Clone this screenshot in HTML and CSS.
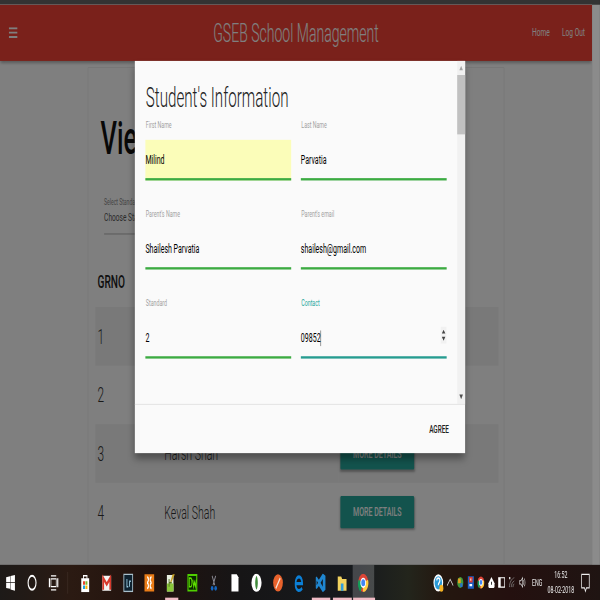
FILE: index.html
```html
<!DOCTYPE html>
<html lang="en">
<head>
<meta charset="utf-8">
<title>GSEB School Management</title>
<link rel="stylesheet" href="styles.css">
</head>
<body>
<div class="frame">
<div class="screen">
  <div class="chrome"></div>
  <div class="viewport">
    <div class="page">
      <nav class="navbar">
        <svg class="menu" viewBox="0 0 20 14"><path d="M0 0h20v2.500H0zM0 5.500h20V8H0zM0 11h20v2.500H0z"/></svg>
        <a class="brand">GSEB School Management</a>
        <div class="navlinks"><a>Home</a><a>Log Out</a></div>
      </nav>
      <main class="card">
        <h1 class="heading">View Students</h1>
        <div class="select">
          <div class="select-label">Select Standard</div>
          <div class="select-value">Choose Standard</div>
        </div>
        <table class="students">
          <thead><tr><th class="c-no">GRNO</th><th class="c-name"></th><th></th></tr></thead>
          <tbody>
            <tr class="odd"><td class="num">1</td><td>Milind Parvatia</td><td><span class="btn">More Details</span></td></tr>
            <tr><td class="num">2</td><td></td><td><span class="btn">More Details</span></td></tr>
            <tr class="odd"><td class="num">3</td><td>Harsh Shah</td><td><span class="btn">More Details</span></td></tr>
            <tr><td class="num">4</td><td>Keval Shah</td><td><span class="btn">More Details</span></td></tr>
          </tbody>
        </table>
      </main>
    </div>
    <div class="page-scroll"></div>
    <div class="overlay"></div>
    <section class="modal">
      <div class="modal-main">
        <div class="modal-body">
          <h2 class="modal-title">Student's Information</h2>
          <div class="form">
            <div class="field"><label class="f-label">First Name</label><div class="f-input autofill">Milind</div></div>
            <div class="field"><label class="f-label">Last Name</label><div class="f-input">Parvatia</div></div>
            <div class="field"><label class="f-label">Parent's Name</label><div class="f-input">Shailesh Parvatia</div></div>
            <div class="field"><label class="f-label">Parent's email</label><div class="f-input">shailesh@gmail.com</div></div>
            <div class="field"><label class="f-label">Standard</label><div class="f-input">2</div></div>
            <div class="field focus"><label class="f-label">Contact</label>
              <div class="f-input">09852<i class="caret"></i>
                <svg class="spin" viewBox="0 0 14 22"><rect width="14" height="22" fill="#f1f1f1"/><path d="M7 4l4 5H3zM7 18l4-5H3z" fill="#444"/></svg>
              </div>
            </div>
          </div>
        </div>
        <div class="vscroll">
          <svg class="arrow" viewBox="0 0 18 18"><path d="M9 6l4 6H5z" fill="#a3a3a3"/></svg>
          <div class="thumb"></div>
          <svg class="arrow arrow-down" viewBox="0 0 18 18"><path d="M9 12l4-6H5z" fill="#505050"/></svg>
        </div>
      </div>
      <footer class="modal-footer"><a class="agree">Agree</a></footer>
    </section>
  </div>
  <div class="taskbar">
    <div class="tb-left">
      <span class="slot"><svg class="ic" viewBox="0 0 24 24"><path fill="#fff" d="M2 5l9-1.500V11H2zM12 3.300L22 2v9H12zM2 12h9v7.500L2 18.500zM12 12h10v10l-10-1.500z"/></svg></span>
      <span class="slot"><svg class="ic" viewBox="0 0 24 24"><circle cx="12" cy="12" r="9" fill="none" stroke="#fff" stroke-width="2.500"/></svg></span>
      <span class="slot"><svg class="ic" viewBox="0 0 24 24"><path fill="none" stroke="#fff" stroke-width="1.600" d="M6 7h12v10H6zM2 7h1v10H2zM21 7h1v10h-1zM6 3h12M6 21h12"/></svg></span>
      <span class="sep"></span>
      <span class="slot"><svg class="ic" viewBox="0 0 24 24"><path fill="none" stroke="#fff" stroke-width="2" d="M8 7V3h8v4"/><path fill="#fff" d="M3 6h18v18H3z"/><path fill="#e8452c" d="M7 10h4.500v4.500H7z"/><path fill="#7cb82f" d="M12.500 10H17v4.500h-4.500z"/><path fill="#1ba1e2" d="M7 15.500h4.500V20H7z"/><path fill="#fbb800" d="M12.500 15.500H17V20h-4.500z"/></svg></span>
      <span class="slot"><svg class="ic" viewBox="0 0 24 24"><path fill="#f4f4f4" d="M2 3h20v19H2z"/><path fill="none" stroke="#d8392c" stroke-width="4" d="M4 21V6l8 8 8-8v15"/></svg></span>
      <span class="slot"><svg class="ic" viewBox="0 0 24 24"><path fill="#0e2230" stroke="#a9c0cc" stroke-width="2" d="M2 1h20v22H2z"/><path fill="none" stroke="#9ccbe0" stroke-width="2" d="M9 7v10h3M15 17v-7h3"/></svg></span>
      <span class="slot"><svg class="ic" viewBox="0 0 24 24"><path fill="#ea7c17" d="M1 1h22v22H1z"/><path fill="none" stroke="#fff" stroke-width="2.500" d="M7 5c4 0 4 6 0 7 4 1 4 7 0 7M17 5c-4 0-4 6 0 7-4 1-4 7 0 7"/></svg></span>
      <span class="slot"><svg class="ic" viewBox="0 0 24 24"><path fill="#e9efe0" d="M3 2h15v21H3z"/><path fill="#8bc83a" d="M3 13h15v10H3z"/><path fill="#c9a227" d="M16 1h5l-9 12-2-1z"/><path fill="#56741d" d="M7 7h2v10H7zM9 11h5v2H9z"/></svg></span>
      <span class="slot"><svg class="ic" viewBox="0 0 24 24"><path fill="#0a2a00" stroke="#4fd000" stroke-width="2.500" d="M2 2h20v20H2z"/><path fill="none" stroke="#5fe000" stroke-width="2" d="M5 6h3c4 0 4 11 0 11H5zM13 8l2 9 2-6 2 6 2-9"/></svg></span>
      <span class="slot"><svg class="ic" viewBox="0 0 24 24"><path fill="none" stroke="#8a8a94" stroke-width="2" d="M8 3l6 12M16 3l-6 12"/><circle cx="8" cy="19" r="3" fill="#1566c0"/><circle cx="16" cy="19" r="3" fill="#1566c0"/></svg></span>
      <span class="slot"><svg class="ic" viewBox="0 0 24 24"><path fill="#fff" d="M4 1h12l4 4v18H4z"/></svg></span>
      <span class="slot"><svg class="ic" viewBox="0 0 24 24"><circle cx="12" cy="12" r="11.500" fill="#fff"/><path fill="#3f8a3a" d="M12 3c4 4 4 14 0 18-4-4-4-14 0-18z"/></svg></span>
      <span class="slot"><svg class="ic" viewBox="0 0 24 24"><circle cx="12" cy="12" r="11" fill="#e8622c"/><path fill="none" stroke="#f6e4d8" stroke-width="2.500" d="M7 19L17 6"/></svg></span>
      <span class="slot"><svg class="ic" viewBox="0 0 24 24"><path fill="none" stroke="#0b7fd6" stroke-width="4" d="M4 13h15c0-12-15-11-15 0s10 10 15 6"/></svg></span>
      <span class="slot"><svg class="ic" viewBox="0 0 24 24"><path fill="#1f86d0" d="M17 0l6 3v18l-6 3-9-8-5 4-2-1V5l2-1 5 4zM17 7l-5 5 5 5zM3 9v6l3-3z"/></svg></span>
      <span class="slot"><svg class="ic" viewBox="0 0 24 24"><path fill="#f2d25f" d="M2 4h8l2 3h10v15H2z"/><path fill="#2e9ee0" d="M9 13h6v9H9z"/></svg></span>
      <span class="slot active"><svg class="ic" viewBox="0 0 24 24"><circle cx="12" cy="12" r="11.500" fill="#db4437"/><path fill="#0f9d58" d="M12 12L6 23.500A11.500 11.500 0 0 1 1.500 8z"/><path fill="#ffcd40" d="M12 12l11-4a11.500 11.500 0 0 1-12 15.500z"/><circle cx="12" cy="12" r="5.500" fill="#4285f4" stroke="#fff" stroke-width="2"/></svg></span>
    </div>
    <div class="tray">
      <span class="t-item t-help"><svg class="ic" viewBox="0 0 24 24"><circle cx="12" cy="12" r="11" fill="#fff"/><circle cx="12" cy="12" r="8.500" fill="#2a9bd8"/><path fill="none" stroke="#fff" stroke-width="2.500" d="M8.500 9c0-4 7-4 7 0 0 3-3.500 3-3.500 6"/><circle cx="19" cy="19" r="4.500" fill="#f5b324"/></svg></span>
      <span class="t-item"><svg class="ic-s" viewBox="0 0 16 16"><path fill="none" stroke="#ddd" stroke-width="1.500" d="M1 12l7-8 7 8"/></svg></span>
      <span class="t-item"><svg class="ic-s" viewBox="0 0 16 16"><circle cx="8" cy="8" r="7" fill="#3f9a3c"/><path fill="#e8a020" d="M3 3h6v6H3z"/><path fill="#2a6fd0" d="M8 9h5v5H8z"/></svg></span>
      <span class="t-item"><svg class="ic-s" viewBox="0 0 16 16"><path fill="#1d5fc4" d="M1 0h14v16H1z"/><path fill="#e23b32" d="M4 1h8v7H4z"/><path fill="#fff" d="M7 3h2v3H7zM5 10h6v3H5z"/></svg></span>
      <span class="t-item"><svg class="ic-s" viewBox="0 0 24 24"><circle cx="12" cy="12" r="11.500" fill="#db4437"/><path fill="#0f9d58" d="M12 12L6 23.500A11.500 11.500 0 0 1 1.500 8z"/><path fill="#ffcd40" d="M12 12l11-4a11.500 11.500 0 0 1-12 15.500z"/><circle cx="12" cy="12" r="5.500" fill="#4285f4" stroke="#fff" stroke-width="2"/></svg></span>
      <span class="t-item"><svg class="ic-s" viewBox="0 0 16 16"><path fill="#fff" d="M8 1l7 8v4a2 2 0 0 1-2 2H3a2 2 0 0 1-2-2V9z"/><path fill="#222" d="M7 7h2v4H7z"/></svg></span>
      <span class="t-item"><svg class="ic-s" viewBox="0 0 16 16"><path fill="none" stroke="#fff" stroke-width="1.500" d="M1 2h14v12H1z"/><path fill="#fff" d="M1 2h5v12H1z"/></svg></span>
      <span class="t-item"><svg class="ic-s" viewBox="0 0 16 16"><path fill="none" stroke="#8a8a8a" stroke-width="1.200" d="M2 14C2 8 7 3 13 2M6 14c0-3 3-7 7-8M10 14c0-2 1-4 3-4"/><path fill="#ddd" d="M1 1h3v3H1z"/></svg></span>
      <span class="t-item"><svg class="ic-s" viewBox="0 0 16 16"><path fill="none" stroke="#ddd" stroke-width="1.300" d="M2 6h3l4-4v12l-4-4H2zM11 5c1 2 1 4 0 6M13 3c2 3 2 7 0 10"/></svg></span>
      <span class="t-lang">ENG</span>
      <span class="t-clock"><span>16:52</span><span>08-02-2018</span></span>
      <span class="t-note"><svg class="ic-n" viewBox="0 0 20 24"><path fill="none" stroke="#eee" stroke-width="1.600" d="M2 2h16v16h-6l-2 4-2-4H2z"/></svg></span>
    </div>
    <div class="running">
      <i class="run run-a"></i><i class="run run-b"></i><i class="run run-c"></i><i class="run run-d"></i>
    </div>
  </div>
</div>
</div>
</body>
</html>
```

FILE: styles.css
```css
* { box-sizing: border-box; }
html, body { margin: 0; padding: 0; overflow: hidden; }
body { width: 600px; height: 600px; background: #222; }
.frame { width: 600px; height: 600px; overflow: hidden; contain: paint; }

/* The reference is a 1366x768 desktop squeezed into 600x600. */
.screen {
  width: 1366px;
  height: 768px;
  transform: scale(0.4392, 0.78125);
  transform-origin: 0 0;
  filter: blur(0.5px);
  display: flex;
  flex-direction: column;
  font-family: Roboto, "Liberation Sans", sans-serif;
  overflow: hidden;
}
.chrome { height: 6px; background: #333; flex: none; }
.viewport { flex: 1; display: flex; position: relative; min-height: 0; }
.page { flex: 1; background: #fff; min-width: 0; overflow: hidden; }
.page-scroll { width: 18px; background: #8b8b8b; flex: none; position: relative; z-index: 3; }

.navbar {
  height: 72px;
  background: #f44336;
  color: #fff;
  display: flex;
  align-items: center;
  position: relative;
  padding: 0 16px 0 20px;
  box-shadow: 0 2px 5px rgba(0,0,0,.3);
}
.menu { width: 20px; height: 14px; fill: #fff; }
.brand {
  position: absolute;
  left: 0;
  right: 0;
  top: 17px;
  text-align: center;
  font-size: 32px;
  line-height: 40px;
  font-weight: 300;
}
.navlinks { margin-left: auto; display: flex; gap: 28px; font-size: 15px; margin-top: -2px; }

.card {
  margin: 9px 200px 0;
  height: 636px;
  width: 948px;
  padding: 0 14px;
  border: 1px solid #e4e4e4;
  border-width: 0 1px;
  box-shadow: 0 -1px 0 #ececec;
}
.heading {
  margin: 0;
  padding: 45px 0 0 14px;
  font-size: 58px;
  line-height: 90px;
  font-weight: 500;
  color: #111;
  white-space: nowrap;
}
.select { margin: 30px 0 0 22px; width: 600px; border-bottom: 1px solid #9e9e9e; height: 48px; color: #666; }
.select-label { font-size: 11.500px; line-height: 14px; color: #888; }
.select-value { font-size: 15px; line-height: 24px; color: #555; }

.students { border-collapse: collapse; width: 918px; margin: 38px 0 0 2px; table-layout: fixed; }
.students th { text-align: left; font-size: 23px; font-weight: 500; height: 55px; padding: 0 0 10px 5px; color: #222; }
.c-no { width: 152px; }
.c-name { width: 401px; }
.students td { height: 75px; padding: 0 0 0 5px; font-size: 24px; font-weight: 300; color: #333; }
.students td.num { font-size: 27px; }
.odd { background: #f2f2f2; }
.btn {
  display: inline-flex;
  align-items: center;
  justify-content: center;
  width: 168px;
  height: 41px;
  background: #26a69a;
  color: #fff;
  font-size: 16px;
  font-weight: 500;
  text-transform: uppercase;
  border-radius: 2px;
  box-shadow: 0 2px 4px rgba(0,0,0,.3);
}

.overlay { position: absolute; left: 0; top: 0; bottom: 0; width: 1348px; background: rgba(0,0,0,.5); z-index: 1; }

.modal {
  position: absolute;
  left: 307px;
  top: 72px;
  width: 752px;
  height: 502px;
  background: #fafafa;
  z-index: 2;
  display: flex;
  flex-direction: column;
  box-shadow: 0 8px 12px rgba(0,0,0,.35);
}
.modal-main { height: 439px; display: flex; flex: none; }
.modal-body { flex: 1; padding: 27px 0 0 24px; min-width: 0; }
.modal-title { margin: 0 0 5px 1px; font-size: 34.500px; line-height: 40px; font-weight: 300; color: #222; }
.form { display: grid; grid-template-columns: 332px 332px; column-gap: 22px; row-gap: 33px; }
.field { height: 81px; display: flex; flex-direction: column; }
.f-label { height: 29px; line-height: 21px; font-size: 12px; color: #9e9e9e; padding-left: 1px; }
.f-input {
  height: 52px;
  display: flex;
  align-items: center;
  position: relative;
  font-size: 16px;
  font-weight: 400;
  color: #000;
  border-bottom: 3px solid #3cab42;
  padding-top: 2px;
}
.autofill { background: #fbfdb9; }
.focus .f-label { color: #26a69a; }
.focus .f-input { border-bottom-color: #269c90; }
.caret { display: inline-block; width: 1px; height: 20px; background: #222; }
.spin { position: absolute; right: 0; top: 11px; width: 14px; height: 22px; }

.vscroll { width: 18px; flex: none; background: #f1f1f1; display: flex; flex-direction: column; }
.arrow { width: 18px; height: 18px; display: block; flex: none; }
.thumb { height: 76px; background: #c1c1c1; }
.arrow-down { margin-top: auto; }

.modal-footer {
  flex: 1;
  border-top: 1px solid #dcdcdc;
  display: flex;
  align-items: center;
  justify-content: flex-end;
  padding: 0 37px 0 0;
}
.agree { font-size: 14.500px; font-weight: 500; text-transform: uppercase; color: #222; }

.taskbar {
  height: 45px;
  flex: none;
  display: flex;
  position: relative;
  color: #eee;
  background: linear-gradient(90deg, #1d1a18 0%, #2b1a12 12%, #21120e 25%, #161516 40%, #171a1e 60%, #23251c 68%, #24170f 74%, #24100f 85%, #1f1412 100%);
}
.tb-left { display: flex; align-items: center; }
.slot { width: 48.700px; height: 45px; display: flex; align-items: center; justify-content: center; flex: none; }
.slot.active { background: rgba(255,255,255,.2); }
.sep { width: 1px; height: 28px; background: #4a3a32; margin: 0 15px 0 8px; flex: none; }
.ic { width: 26px; height: 24px; display: block; }
.ic-s { width: 16px; height: 17px; display: block; }
.ic-n { width: 22px; height: 26px; display: block; }
.tray { margin-left: auto; display: flex; align-items: center; padding-right: 9px; }
.t-item { width: 23.500px; display: flex; justify-content: center; }
.t-help { width: 30px; }
.t-lang { width: 44px; text-align: center; font-size: 12px; }
.t-clock { width: 64px; display: flex; flex-direction: column; align-items: center; font-size: 12px; line-height: 19px; }
.t-note { width: 48px; display: flex; justify-content: center; }
.running { position: absolute; left: 0; right: 0; bottom: 0; height: 3px; }
.run { position: absolute; top: 0; height: 3px; background: #f0bcc6; }
.run-a { left: 376px; width: 30px; }
.run-b { left: 710px; width: 42px; }
.run-c { left: 758px; width: 43px; }
.run-d { left: 804px; width: 50px; }
```
